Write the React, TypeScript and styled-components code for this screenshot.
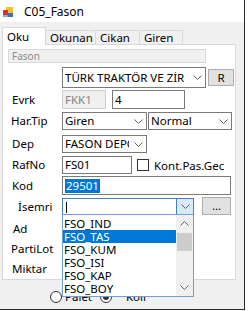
import React from 'react';
import styled, { createGlobalStyle } from 'styled-components';

const Global = createGlobalStyle`
  html, body { margin: 0; padding: 0; background: #ffffff; }
  body { font-family: "Noto Sans", "Segoe UI", sans-serif; font-size: 11.5px; color: #000; }
  * { box-sizing: border-box; }
`;

const Window = styled.div`
  width: 245px;
  height: 310px;
  border-right: 1px solid #2b2b2b;
  border-bottom: 1px solid #2b2b2b;
  display: flex;
  flex-direction: column;
  background: #f0f0f0;
`;

const TitleBar = styled.div`
  flex: none;
  height: 22px;
  background: #ffffff;
  display: flex;
  align-items: center;
  gap: 11px;
  padding: 2px 0 0 3px;
`;

const TitleText = styled.span`
  font-size: 12px;
  line-height: 14px;
`;

const Body = styled.div`
  flex: 1;
  display: flex;
  flex-direction: column;
  padding: 5px 0 0 2px;
`;

const TabStrip = styled.div`
  display: flex;
  align-items: flex-start;
  height: 17px;
  position: relative;
  z-index: 2;
`;

const Tab = styled.div<{ $w: number; $active?: boolean }>`
  width: ${p => p.$w}px;
  height: ${p => (p.$active ? 18 : 14)}px;
  margin-top: ${p => (p.$active ? 0 : 3)}px;
  margin-left: ${p => (p.$active ? 0 : -1)}px;
  background: ${p => (p.$active ? '#ffffff' : '#f0f0f0')};
  border: 1px solid #d9d9d9;
  border-bottom: none;
  padding: ${p => (p.$active ? '0 0 0 4px' : '1px 0 0 4px')};
  display: flex;
  align-items: center;
  line-height: 12px;
`;

const Panel = styled.div`
  position: relative;
  z-index: 1;
  width: 234px;
  height: 236px;
  background: #ffffff;
  border: 1px solid #d9d9d9;
  display: flex;
  flex-direction: column;
  padding-top: 4px;
`;

const GroupBox = styled.div`
  margin-left: 5px;
  width: 198px;
  height: 14px;
  background: #f0f0f0;
  border: 1px solid #dadada;
  color: #8a8a8a;
  font-size: 10px;
  line-height: 12px;
  padding-left: 3px;
`;

const FormRow = styled.div<{ $h: number; $mt: number; $z?: number }>`
  display: grid;
  grid-template-columns: 59px auto;
  align-items: center;
  height: ${p => p.$h}px;
  margin-top: ${p => p.$mt}px;
  position: relative;
  z-index: ${p => p.$z ?? 0};
`;

const Label = styled.span<{ $x: number }>`
  padding-left: ${p => p.$x}px;
  line-height: 14px;
  white-space: nowrap;
`;

const Controls = styled.div<{ $gap?: number }>`
  display: flex;
  align-items: center;
  gap: ${p => p.$gap ?? 0}px;
  height: 100%;
`;

const Combo = styled.div<{ $w: number; $focus?: boolean }>`
  position: relative;
  width: ${p => p.$w}px;
  height: 100%;
  background: #ffffff;
  border: 1px solid ${p => (p.$focus ? '#4a7fbf' : '#7a7a7a')};
  display: flex;
  align-items: center;
`;

const ComboText = styled.span`
  flex: 1;
  overflow: hidden;
  white-space: nowrap;
  padding-left: 2px;
  line-height: 14px;
`;

const DropBtn = styled.span<{ $focus?: boolean }>`
  flex: none;
  width: 17px;
  height: 100%;
  display: flex;
  align-items: center;
  justify-content: center;
  background: ${p => (p.$focus ? '#d9ebf9' : 'transparent')};
  border-left: 1px solid ${p => (p.$focus ? '#4a7fbf' : 'transparent')};
`;

const TextBox = styled.div<{ $w: number; $disabled?: boolean }>`
  width: ${p => p.$w}px;
  height: 100%;
  background: ${p => (p.$disabled ? '#f0f0f0' : '#ffffff')};
  border: 1px solid ${p => (p.$disabled ? '#cccccc' : '#7a7a7a')};
  color: ${p => (p.$disabled ? '#848484' : '#000')};
  display: flex;
  align-items: center;
  padding-left: 2px;
  line-height: 14px;
  white-space: nowrap;
`;

const Selected = styled.span`
  background: #0078d7;
  color: #ffffff;
  padding: 0 1px;
`;

const Caret = styled.span`
  width: 1px;
  height: 11px;
  background: #000;
  margin-left: 1px;
`;

const Button = styled.div<{ $w: number; $h: number; $mt?: number }>`
  width: ${p => p.$w}px;
  height: ${p => p.$h}px;
  margin-top: ${p => p.$mt ?? 0}px;
  background: #e1e1e1;
  border: 1px solid #adadad;
  display: flex;
  align-items: center;
  justify-content: center;
  line-height: 12px;
`;

const CheckBox = styled.span`
  width: 12px;
  height: 12px;
  border: 1px solid #333333;
  background: #ffffff;
`;

const DropList = styled.div`
  position: absolute;
  left: -1px;
  top: 15px;
  width: 132px;
  height: 83px;
  background: #ffffff;
  border: 1px solid #6f9fd8;
  display: flex;
  z-index: 5;
`;

const Items = styled.div`
  flex: 1;
  display: flex;
  flex-direction: column;
  padding-top: 2px;
`;

const Item = styled.div<{ $sel?: boolean }>`
  height: 13px;
  line-height: 13px;
  padding-left: 1px;
  background: ${p => (p.$sel ? '#0078d7' : 'transparent')};
  color: ${p => (p.$sel ? '#ffffff' : '#000')};
  white-space: nowrap;
`;

const ScrollBar = styled.div`
  flex: none;
  width: 17px;
  background: #f0f0f0;
  display: flex;
  flex-direction: column;
  align-items: center;
`;

const ScrollArrow = styled.div`
  height: 17px;
  display: flex;
  align-items: center;
  justify-content: center;
`;

const Thumb = styled.div`
  width: 15px;
  height: 18px;
  background: #cdcdcd;
  margin-top: 1px;
`;

const RadioRow = styled.div`
  display: flex;
  align-items: center;
  height: 12px;
  margin-top: 11px;
  padding-left: 48px;
`;

const RadioItem = styled.div<{ $w: number }>`
  width: ${p => p.$w}px;
  display: flex;
  align-items: center;
  gap: 3px;
  line-height: 12px;
`;

const RadioCircle = styled.span<{ $checked?: boolean }>`
  width: 12px;
  height: 12px;
  border-radius: 50%;
  border: 1px solid #333333;
  background: #ffffff;
  display: flex;
  align-items: center;
  justify-content: center;
  &::after {
    content: '';
    width: 6px;
    height: 6px;
    border-radius: 50%;
    background: ${p => (p.$checked ? '#333333' : 'transparent')};
  }
`;

const Chevron = ({ up = false }: { up?: boolean }) => (
  <svg width="9" height="5" viewBox="0 0 9 5">
    <polyline
      points={up ? '0.5,4.5 4.5,0.5 8.5,4.5' : '0.5,0.5 4.5,4.5 8.5,0.5'}
      fill="none"
      stroke="#606060"
      strokeWidth="1"
    />
  </svg>
);

const AppIcon = () => (
  <svg width="10" height="10" viewBox="0 0 10 10">
    <rect x="3" y="0" width="7" height="7" fill="#f2c233" />
    <rect x="0" y="3" width="5" height="5" fill="#d8322a" />
    <rect x="5" y="6" width="5" height="4" fill="#3a6fc4" />
    <rect x="0" y="8" width="5" height="2" fill="#8aa6d8" />
  </svg>
);

export default function App() {
  return (
    <>
      <Global />
      <Window>
        <TitleBar>
          <AppIcon />
          <TitleText>C05_Fason</TitleText>
        </TitleBar>
        <Body>
          <TabStrip>
            <Tab $w={44} $active>Oku</Tab>
            <Tab $w={51}>Okunan</Tab>
            <Tab $w={45}>Cikan</Tab>
            <Tab $w={44}>Giren</Tab>
          </TabStrip>
          <Panel>
            <GroupBox>Fason</GroupBox>
            <FormRow $h={21} $mt={4}>
              <Label $x={9} />
              <Controls $gap={2}>
                <Combo $w={144}>
                  <ComboText>TÜRK TRAKTÖR VE ZİR</ComboText>
                  <DropBtn><Chevron /></DropBtn>
                </Combo>
                <Button $w={26} $h={17}>R</Button>
              </Controls>
            </FormRow>
            <FormRow $h={19} $mt={2}>
              <Label $x={9}>Evrk</Label>
              <Controls $gap={6}>
                <TextBox $w={44} $disabled>FKK1</TextBox>
                <TextBox $w={73}>4</TextBox>
              </Controls>
            </FormRow>
            <FormRow $h={18} $mt={3}>
              <Label $x={8}>Har.Tip</Label>
              <Controls $gap={1}>
                <Combo $w={85}>
                  <ComboText>Giren</ComboText>
                  <DropBtn><Chevron /></DropBtn>
                </Combo>
                <Combo $w={84}>
                  <ComboText>Normal</ComboText>
                  <DropBtn><Chevron /></DropBtn>
                </Combo>
              </Controls>
            </FormRow>
            <FormRow $h={18} $mt={5}>
              <Label $x={9}>Dep</Label>
              <Controls>
                <Combo $w={85}>
                  <ComboText>FASON DEPO</ComboText>
                  <DropBtn><Chevron /></DropBtn>
                </Combo>
              </Controls>
            </FormRow>
            <FormRow $h={18} $mt={3}>
              <Label $x={9}>RafNo</Label>
              <Controls $gap={5}>
                <TextBox $w={70}>FS01</TextBox>
                <CheckBox />
                <span>Kont.Pas.Gec</span>
              </Controls>
            </FormRow>
            <FormRow $h={19} $mt={2}>
              <Label $x={9}>Kod</Label>
              <Controls>
                <TextBox $w={169}><Selected>29501</Selected></TextBox>
              </Controls>
            </FormRow>
            <FormRow $h={17} $mt={3} $z={5}>
              <Label $x={15}>İsemri</Label>
              <Controls $gap={8}>
                <Combo $w={132} $focus>
                  <ComboText><Caret as="span" style={{ display: 'inline-block', verticalAlign: 'middle' }} /></ComboText>
                  <DropBtn $focus><Chevron /></DropBtn>
                  <DropList>
                    <Items>
                      <Item>FSO_IND</Item>
                      <Item $sel>FSO_TAS</Item>
                      <Item>FSO_KUM</Item>
                      <Item>FSO_ISI</Item>
                      <Item>FSO_KAP</Item>
                      <Item>FSO_BOY</Item>
                    </Items>
                    <ScrollBar>
                      <ScrollArrow><Chevron up /></ScrollArrow>
                      <Thumb />
                      <div style={{ flex: 1 }} />
                      <ScrollArrow><Chevron /></ScrollArrow>
                    </ScrollBar>
                  </DropList>
                </Combo>
                <Button $w={29} $h={18} $mt={-1}>...</Button>
              </Controls>
            </FormRow>
            <FormRow $h={19} $mt={4}>
              <Label $x={10}>Ad</Label>
            </FormRow>
            <FormRow $h={19} $mt={1}>
              <Label $x={8}>PartiLot</Label>
            </FormRow>
            <FormRow $h={19} $mt={1}>
              <Label $x={9}>Miktar</Label>
            </FormRow>
          </Panel>
          <RadioRow>
            <RadioItem $w={50}>
              <RadioCircle />
              <span>Palet</span>
            </RadioItem>
            <RadioItem $w={60}>
              <RadioCircle $checked />
              <span style={{ marginLeft: 11 }}>Koli</span>
            </RadioItem>
          </RadioRow>
        </Body>
      </Window>
    </>
  );
}
